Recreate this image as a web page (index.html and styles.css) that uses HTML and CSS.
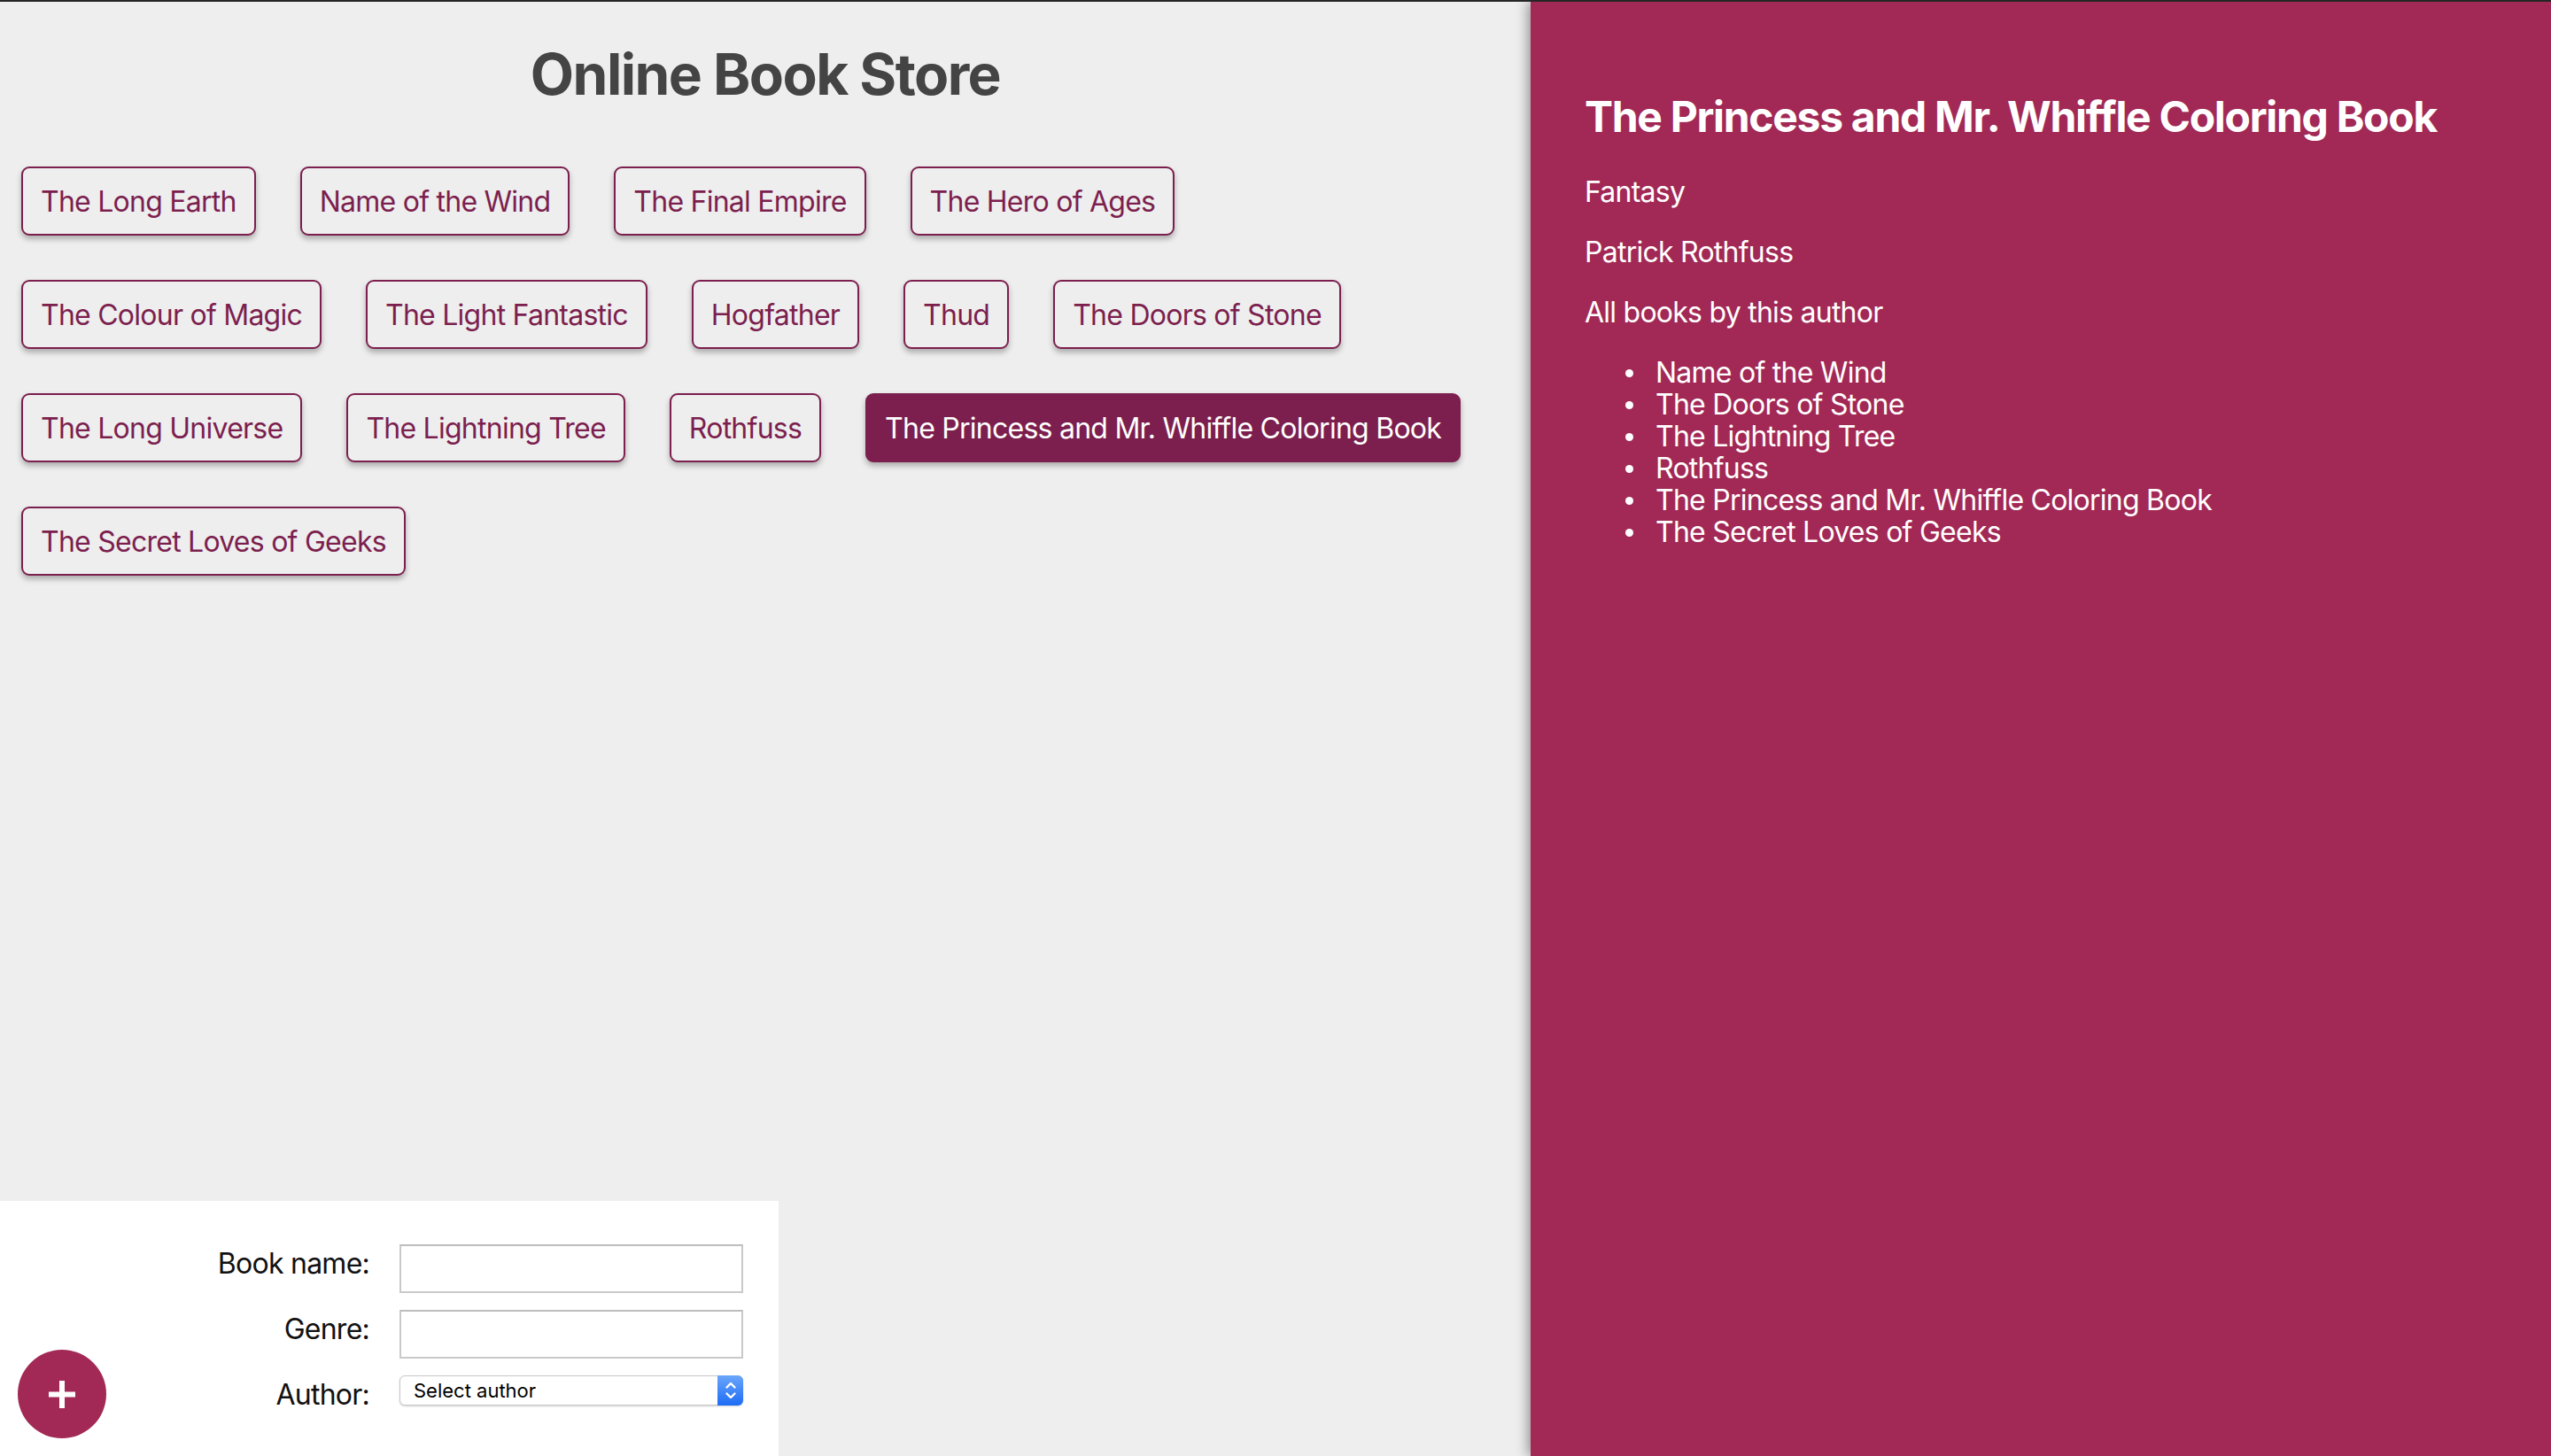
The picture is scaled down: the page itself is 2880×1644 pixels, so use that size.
FILE: index.html
```html
<!DOCTYPE html>
<html lang="en">
<head>
<meta charset="utf-8">
<title>Online Book Store</title>
<link rel="stylesheet" href="styles.css">
</head>
<body>
<div class="page">
  <main class="main">
    <h1 class="title">Online Book Store</h1>
    <div class="books">
      <div class="book-row">
        <button class="book">The Long Earth</button>
        <button class="book">Name of the Wind</button>
        <button class="book">The Final Empire</button>
        <button class="book">The Hero of Ages</button>
      </div>
      <div class="book-row">
        <button class="book">The Colour of Magic</button>
        <button class="book">The Light Fantastic</button>
        <button class="book">Hogfather</button>
        <button class="book">Thud</button>
        <button class="book">The Doors of Stone</button>
      </div>
      <div class="book-row">
        <button class="book">The Long Universe</button>
        <button class="book">The Lightning Tree</button>
        <button class="book">Rothfuss</button>
        <button class="book book-selected">The Princess and Mr. Whiffle Coloring Book</button>
      </div>
      <div class="book-row">
        <button class="book">The Secret Loves of Geeks</button>
      </div>
    </div>
    <form class="add-form">
      <label class="form-label" for="bookName">Book name:</label>
      <input class="form-input" id="bookName" type="text">
      <label class="form-label" for="genre">Genre:</label>
      <input class="form-input" id="genre" type="text">
      <label class="form-label" for="author">Author:</label>
      <div class="select-wrap">
        <select class="form-select" id="author">
          <option>Select author</option>
        </select>
        <span class="select-arrows">
          <svg width="14" height="22" viewBox="0 0 14 22" fill="none" stroke="#fff" stroke-width="2.4" stroke-linecap="round" stroke-linejoin="round"><path d="M2.5 7.5 L7 3 L11.5 7.5"/><path d="M2.5 14.5 L7 19 L11.5 14.5"/></svg>
        </span>
      </div>
    </form>
  </main>
  <aside class="details">
    <h2 class="details-title">The Princess and Mr. Whiffle Coloring Book</h2>
    <p class="details-text">Fantasy</p>
    <p class="details-text">Patrick Rothfuss</p>
    <p class="details-text">All books by this author</p>
    <ul class="author-books">
      <li>Name of the Wind</li>
      <li>The Doors of Stone</li>
      <li>The Lightning Tree</li>
      <li>Rothfuss</li>
      <li>The Princess and Mr. Whiffle Coloring Book</li>
      <li>The Secret Loves of Geeks</li>
    </ul>
  </aside>
</div>
<button class="fab" aria-label="Add book">
  <svg width="30" height="31" viewBox="0 0 30 31"><rect x="12" y="0" width="6" height="31" fill="#fff"/><rect x="0" y="12.5" width="30" height="6" fill="#fff"/></svg>
</button>
</body>
</html>
```
FILE: styles.css
```css
html, body {
  margin: 0;
  padding: 0;
}
body {
  font-family: Inter, "Noto Sans", "Liberation Sans", sans-serif;
  border-top: 2px solid #252525;
  height: 1642px;
  overflow: hidden;
}
.page {
  display: flex;
  height: 1642px;
}
.main {
  width: 1728px;
  flex: 0 0 1728px;
  background: #eeeeee;
  display: flex;
  flex-direction: column;
}
.title {
  margin: 43px 0 0;
  text-align: center;
  font-size: 64px;
  font-weight: 700;
  line-height: normal;
  color: #444444;
  letter-spacing: -1.55px;
}
.books {
  margin-top: 66px;
  padding: 0 24px;
  display: flex;
  flex-direction: column;
  gap: 50px;
}
.book-row {
  display: flex;
  gap: 50px;
}
.book {
  height: 78px;
  padding: 0 20px;
  border: 2px solid #7c1f4e;
  border-radius: 9px;
  background: #eeeeee;
  color: #7c1f4e;
  font-family: Inter, "Noto Sans", "Liberation Sans", sans-serif;
  font-size: 32px;
  letter-spacing: -0.75px;
  line-height: 76px;
  white-space: nowrap;
  box-shadow: 0 4px 6px rgba(0, 0, 0, 0.28);
  cursor: pointer;
}
.book-selected {
  background: #7c1f4e;
  color: #ffffff;
}
.add-form {
  margin-top: auto;
  width: 879px;
  height: 288px;
  box-sizing: border-box;
  background: #ffffff;
  padding: 49px 40px 0 0;
  display: grid;
  grid-template-columns: auto 388px;
  justify-content: end;
  align-items: start;
  column-gap: 34px;
  row-gap: 19px;
  align-content: start;
}
.form-label {
  font-size: 32px;
  letter-spacing: -0.75px;
  line-height: 38px;
  padding-top: 3px;
  text-align: right;
  color: #111111;
}
.form-input {
  width: 388px;
  height: 55px;
  box-sizing: border-box;
  border: 2px solid #c9c9c9;
  border-top-color: #bdbdbd;
  background: #ffffff;
  margin: 0;
  padding: 0 10px;
  font-size: 24px;
  border-radius: 0;
}
.select-wrap {
  position: relative;
  width: 388px;
  height: 34px;
}
.form-select {
  appearance: none;
  -webkit-appearance: none;
  width: 388px;
  height: 34px;
  box-sizing: border-box;
  border: 1px solid #c8c8c8;
  border-radius: 6px;
  background: #ffffff;
  box-shadow: 0 1px 2px rgba(0, 0, 0, 0.18);
  margin: 0;
  padding: 0 0 0 15px;
  font-family: Inter, "Noto Sans", "Liberation Sans", sans-serif;
  font-size: 22px;
  color: #000000;
}
.select-arrows {
  position: absolute;
  top: 0;
  right: 0;
  width: 29px;
  height: 34px;
  border-radius: 0 6px 6px 0;
  background: linear-gradient(#6aa6fa, #1d6cf5);
  display: flex;
  align-items: center;
  justify-content: center;
  pointer-events: none;
}
.details {
  flex: 1;
  background: #a22955;
  color: #ffffff;
  padding: 60px 61px;
  box-shadow: -4px 0 12px rgba(0, 0, 0, 0.35);
}
.details-title {
  margin: 40px 0 38px;
  font-size: 48px;
  font-weight: 700;
  line-height: normal;
  letter-spacing: -1.3px;
}
.details-text {
  margin: 32px 0;
  font-size: 32px;
  letter-spacing: -0.75px;
  line-height: 36px;
}
.author-books {
  margin: 32px 0;
  padding-left: 80px;
  list-style: none;
  font-size: 32px;
  letter-spacing: -0.75px;
  line-height: 36px;
}
.author-books li {
  position: relative;
}
.author-books li::before {
  content: "";
  position: absolute;
  left: -34px;
  top: 14px;
  width: 9px;
  height: 9px;
  border-radius: 50%;
  background: #ffffff;
}
.fab {
  position: fixed;
  left: 20px;
  bottom: 20px;
  width: 100px;
  height: 100px;
  border: none;
  border-radius: 50%;
  background: #a22955;
  padding: 0;
  display: flex;
  align-items: center;
  justify-content: center;
  cursor: pointer;
}
```
